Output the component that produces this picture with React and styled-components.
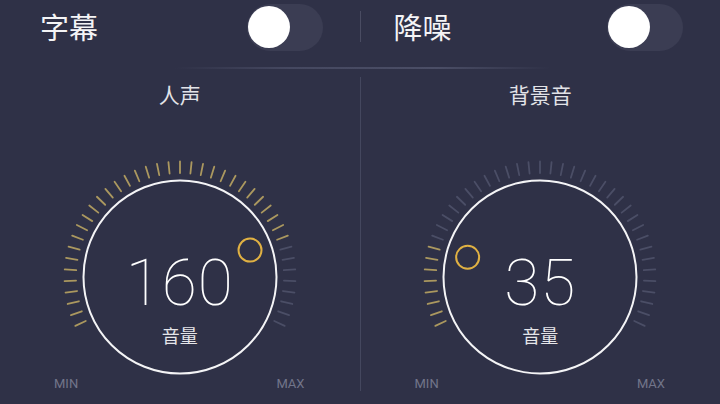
import React, { useState } from "react";
import styled, { createGlobalStyle } from "styled-components";

const GlobalStyle = createGlobalStyle`
  html, body {
    margin: 0;
    padding: 0;
    background: #2f3147;
  }
  body {
    font-family: "Noto Sans", "Noto Sans CJK SC", sans-serif;
  }
`;

const TICKS = 41;
const SWEEP = 230;
const MAX = 200;

function Dial({ value }) {
  const frac = value / MAX;
  const activeIndex = Math.round(frac * (TICKS - 1));
  const cx = 120;
  const cy = 120;

  const ticks = [];
  for (let i = 0; i < TICKS; i++) {
    const deg = -SWEEP / 2 + (i * SWEEP) / (TICKS - 1);
    const rad = (deg * Math.PI) / 180;
    const sx = Math.sin(rad);
    const sy = -Math.cos(rad);
    ticks.push(
      <line
        key={i}
        x1={cx + sx * 104}
        y1={cy + sy * 104}
        x2={cx + sx * 115.5}
        y2={cy + sy * 115.5}
        stroke={i <= activeIndex ? "#ab985f" : "#4b4e66"}
        strokeWidth="1.8"
        strokeLinecap="round"
      />
    );
  }

  const knobDeg = -SWEEP / 2 + SWEEP * frac;
  const knobRad = (knobDeg * Math.PI) / 180;
  const kx = cx + Math.sin(knobRad) * 75;
  const ky = cy - Math.cos(knobRad) * 75;

  return (
    <svg width="240" height="222" viewBox="0 0 240 222">
      {ticks}
      <circle cx={cx} cy={cy} r="96.5" fill="none" stroke="#f4f4f6" strokeWidth="2" />
      <circle cx={kx} cy={ky} r="11.5" fill="none" stroke="#e0b143" strokeWidth="2" />
    </svg>
  );
}

function Toggle({ on, onClick }) {
  return (
    <Track on={on ? 1 : 0} onClick={onClick}>
      <Knob />
    </Track>
  );
}

function VolumePanel({ title, value }) {
  return (
    <Panel>
      <PanelTitle>{title}</PanelTitle>
      <DialWrap>
        <Dial value={value} />
        <Readout>
          <Number>{value}</Number>
          <Unit>音量</Unit>
        </Readout>
      </DialWrap>
      <ScaleRow>
        <ScaleLabel>MIN</ScaleLabel>
        <ScaleLabel>MAX</ScaleLabel>
      </ScaleRow>
    </Panel>
  );
}

export default function App() {
  const [subtitle, setSubtitle] = useState(false);
  const [denoise, setDenoise] = useState(false);

  return (
    <Screen>
      <GlobalStyle />
      <TopBar>
        <Setting first>
          <SettingLabel>字幕</SettingLabel>
          <Toggle on={subtitle} onClick={() => setSubtitle(!subtitle)} />
        </Setting>
        <ShortDivider />
        <Setting>
          <SettingLabel>降噪</SettingLabel>
          <Toggle on={denoise} onClick={() => setDenoise(!denoise)} />
        </Setting>
      </TopBar>
      <FadeLine />
      <Panels>
        <VolumePanel title="人声" value={160} />
        <LongDivider />
        <VolumePanel title="背景音" value={35} />
      </Panels>
    </Screen>
  );
}

const Screen = styled.div`
  width: 720px;
  height: 404px;
  overflow: hidden;
  background: #2f3147;
  color: #f2f2f5;
`;

const TopBar = styled.div`
  display: grid;
  grid-template-columns: 1fr 1px 1fr;
  align-items: center;
  height: 54px;
`;

const Setting = styled.div`
  display: flex;
  align-items: center;
  justify-content: space-between;
  padding: 0 37px 0 ${(p) => (p.first ? "40px" : "33px")};
`;

const SettingLabel = styled.span`
  font-family: "Noto Sans CJK SC", sans-serif;
  font-size: 29px;
  line-height: 34px;
  margin-top: -3px;
  color: #f4f4f6;
`;

const Track = styled.div`
  width: 76px;
  height: 47px;
  box-sizing: border-box;
  padding: 2px 3px;
  border-radius: 24px;
  background: #3b3d53;
  display: flex;
  align-items: center;
  justify-content: ${(p) => (p.on ? "flex-end" : "flex-start")};
  cursor: pointer;
`;

const Knob = styled.div`
  width: 42px;
  height: 42px;
  border-radius: 50%;
  background: #ffffff;
  margin-left: -2px;
`;

const ShortDivider = styled.div`
  width: 1px;
  height: 31px;
  margin-top: -2px;
  background: #4a4c62;
`;

const FadeLine = styled.div`
  height: 2px;
  margin: 13px 170px 0 175px;
  background: linear-gradient(
    to right,
    rgba(74, 77, 99, 0),
    #454860 30%,
    #4b4e66 70%,
    rgba(74, 77, 99, 0)
  );
`;

const Panels = styled.div`
  display: grid;
  grid-template-columns: 1fr 1px 1fr;
`;

const LongDivider = styled.div`
  margin-top: 8px;
  background: #44475e;
`;

const Panel = styled.div`
  display: flex;
  flex-direction: column;
  align-items: center;
  padding-top: 13px;
`;

const PanelTitle = styled.div`
  font-family: "Noto Sans CJK SC", sans-serif;
  font-size: 21px;
  line-height: 24px;
  color: #e2e3e8;
`;

const DialWrap = styled.div`
  display: grid;
  width: 240px;
  height: 222px;
  margin-top: 51px;

  & > * {
    grid-area: 1 / 1;
  }
`;

const Readout = styled.div`
  display: flex;
  flex-direction: column;
  align-items: center;
  padding-top: 95px;
`;

const Number = styled.div`
  font-family: Roboto, "Liberation Sans", sans-serif;
  font-weight: 100;
  font-size: 64px;
  line-height: 64px;
  color: #ffffff;
  letter-spacing: 1px;
`;

const Unit = styled.div`
  font-family: "Noto Sans CJK SC", sans-serif;
  font-size: 18px;
  line-height: 20px;
  margin-top: 9px;
  color: #e6e6ea;
`;

const ScaleRow = styled.div`
  align-self: stretch;
  display: flex;
  justify-content: space-between;
  padding: 0 55px 0 54px;
  margin-top: -2px;
`;

const ScaleLabel = styled.span`
  font-family: Roboto, "Liberation Sans", sans-serif;
  font-size: 13px;
  line-height: 14px;
  color: #72758a;
`;
